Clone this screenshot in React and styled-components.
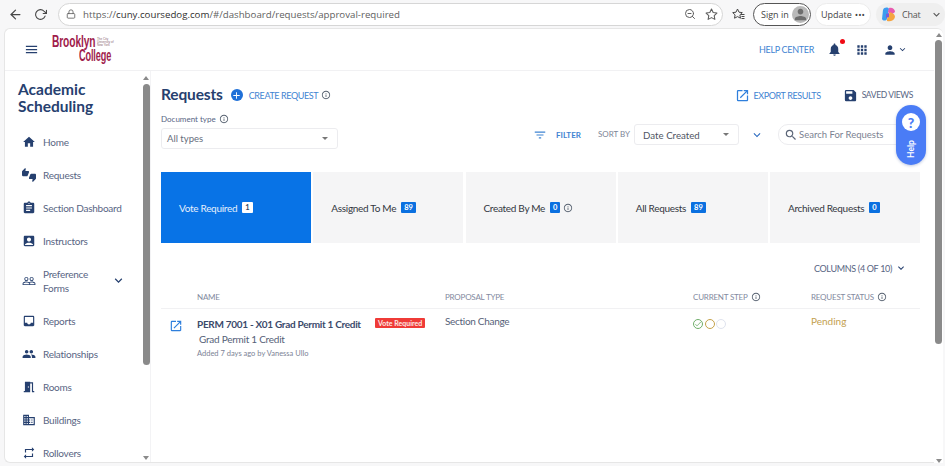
import styled, { createGlobalStyle } from "styled-components";
import {
  MdAccountBox,
  MdAdd,
  MdApps,
  MdAssignment,
  MdCheck,
  MdDomain,
  MdExpandMore,
  MdFilterList,
  MdHome,
  MdInbox,
  MdInfoOutline,
  MdMeetingRoom,
  MdMenu,
  MdNotifications,
  MdOpenInNew,
  MdPeople,
  MdPeopleOutline,
  MdPerson,
  MdRepeat,
  MdSave,
  MdSearch,
  MdThumbsUpDown,
} from "react-icons/md";
import { FiArrowLeft, FiLock, FiRotateCw, FiStar, FiZoomOut } from "react-icons/fi";

const navy = "#26406f";
const link = "#3f84d2";
const label = "#586583";

const GlobalStyle = createGlobalStyle`
  html, body {
    margin: 0;
    height: 466px;
    overflow: hidden;
    background: #f7f7f8;
    font-family: Lato, "Liberation Sans", sans-serif;
  }
  * { box-sizing: border-box; }
`;

const Window = styled.div`
  width: 945px;
  height: 466px;
  display: flex;
  flex-direction: column;
`;

const BrowserBar = styled.div`
  height: 28px;
  flex: none;
  display: flex;
  align-items: center;
  padding: 0 2px 0 8px;
  color: #444;
  font-family: "Open Sans", "Liberation Sans", sans-serif;
`;

const ChromeButton = styled.span`
  width: ${(p) => p.$w}px;
  flex: none;
  display: flex;
  justify-content: center;
  align-items: center;
  font-size: ${(p) => p.$size || 15}px;
  color: #484848;
`;

const UrlPill = styled.div`
  width: 665px;
  height: 23px;
  margin-left: 1px;
  flex: none;
  display: flex;
  align-items: center;
  gap: 7px;
  padding: 0 4px 0 7px;
  background: #fff;
  border: 1px solid #d6d6d6;
  border-radius: 12px;
  font-size: 9.7px;
  color: #5f5f5f;
  svg { flex: none; }
`;

const Url = styled.span`
  flex: 1;
  white-space: nowrap;
  b { font-weight: 400; color: #2f2f2f; }
`;

const UrlStar = styled(FiStar)`
  margin: 0 0 0 2px;
`;

const SignIn = styled.div`
  width: 58px;
  height: 23px;
  flex: none;
  display: flex;
  align-items: center;
  justify-content: space-between;
  padding: 0 1px 0 7px;
  border: 1px solid #555;
  border-radius: 12px;
  background: #fff;
  font-size: 9px;
`;

const Avatar = styled.span`
  width: 17px;
  height: 17px;
  border-radius: 50%;
  background: #b9b9b9;
  color: #6d6d6d;
  display: flex;
  align-items: center;
  justify-content: center;
  font-size: 17px;
`;

const UpdatePill = styled.div`
  width: 56px;
  height: 23px;
  margin-left: 4px;
  flex: none;
  display: flex;
  align-items: center;
  justify-content: center;
  gap: 3px;
  border: 1px solid #ececec;
  border-radius: 12px;
  background: #fff;
  font-size: 9px;
  white-space: nowrap;
`;

const ChatPill = styled.div`
  width: 69px;
  height: 23px;
  margin-left: 5px;
  flex: none;
  display: flex;
  align-items: center;
  gap: 5px;
  padding-left: 4px;
  border-radius: 12px;
  background: #efefef;
  font-size: 9px;
  letter-spacing: -0.2px;
  color: #555;
`;

const ChatChevron = styled(MdExpandMore)`
  margin-left: 4px;
  font-size: 13px;
`;

const PageRow = styled.div`
  flex: 1;
  min-height: 0;
  display: flex;
  padding: 0 2px 3px 4px;
`;

const Frame = styled.div`
  flex: 1;
  min-width: 0;
  display: flex;
  flex-direction: column;
  background: #fff;
  border: 1px solid #e6e6e6;
  border-right: 0;
  border-radius: 6px 0 0 6px;
  overflow: hidden;
  position: relative;
`;

const OuterScroll = styled.div`
  width: 9px;
  flex: none;
  background: #fff;
  border-top: 1px solid #e6e6e6;
  border-radius: 0 6px 0 0;
  display: flex;
  flex-direction: column;
  align-items: center;
`;

const Arrow = styled.span`
  width: 0;
  height: 0;
  flex: none;
  margin-top: ${(p) => p.$mt || 0}px;
  border-left: 3px solid transparent;
  border-right: 3px solid transparent;
  ${(p) => (p.$down ? "border-top" : "border-bottom")}: 4px solid #8a8a8a;
`;

const Thumb = styled.span`
  width: 7px;
  flex: none;
  height: ${(p) => p.$h}px;
  margin-top: ${(p) => p.$top}px;
  background: #8a8a8a;
  border-radius: 4px;
`;

const Spring = styled.span`
  flex: 1;
`;

const TopBar = styled.header`
  height: 42px;
  flex: none;
  display: flex;
  align-items: center;
  padding: 0 26px 0 19px;
  border-bottom: 1px solid #f1f1f3;
  color: ${navy};
`;

const Logo = styled.div`
  width: 62px;
  height: 28px;
  margin-left: 13px;
  margin-top: -2px;
  position: relative;
  color: #a01c4c;
  font-family: "Liberation Sans", sans-serif;
  font-weight: 700;
`;

const LogoWord = styled.span`
  position: absolute;
  left: ${(p) => p.$left}px;
  top: ${(p) => p.$top}px;
  font-size: 16px;
  line-height: 14px;
  transform: scaleX(${(p) => p.$scale});
  transform-origin: left top;
  white-space: nowrap;
  letter-spacing: -0.2px;
`;

const LogoSmall = styled.span`
  position: absolute;
  left: 45px;
  top: 3px;
  width: 17px;
  font-size: 3px;
  line-height: 3.4px;
  font-weight: 400;
  color: #8a6570;
`;

const HelpCenter = styled.a`
  margin-left: auto;
  color: ${link};
  font-size: 9px;
  letter-spacing: -0.3px;
`;

const Bell = styled.span`
  margin-left: 13px;
  position: relative;
  display: flex;
  font-size: 15px;
  &::after {
    content: "";
    position: absolute;
    top: -3px;
    right: -3px;
    width: 5px;
    height: 5px;
    border-radius: 50%;
    background: #f00a14;
  }
`;

const TopIcon = styled.span`
  margin-left: ${(p) => p.$ml}px;
  display: flex;
  font-size: ${(p) => p.$size}px;
`;

const Body = styled.div`
  flex: 1;
  min-height: 0;
  display: flex;
`;

const Sidebar = styled.aside`
  width: 146px;
  flex: none;
  display: flex;
  border-right: 1px solid #f3f3f5;
  overflow: hidden;
`;

const SideContent = styled.div`
  width: 137px;
  flex: none;
  padding: 10px 0 0 13px;
`;

const SideTitle = styled.h2`
  margin: 0 0 10px;
  font-size: 15.5px;
  line-height: 17px;
  font-weight: 700;
  color: ${navy};
`;

const NavList = styled.nav`
  display: flex;
  flex-direction: column;
`;

const NavItem = styled.div`
  min-height: ${(p) => (p.$tall ? 47 : 33)}px;
  display: flex;
  align-items: center;
  gap: 7px;
  padding-left: 4px;
  font-size: 10px;
  letter-spacing: -0.25px;
  line-height: 14px;
  color: ${label};
  svg { flex: none; color: ${navy}; font-size: 14px; }
`;

const NavText = styled.span`
  flex: 1;
`;

const NavChevron = styled.span`
  display: flex;
  margin-right: 16px;
  svg { font-size: 15px; }
`;

const SideScroll = styled.div`
  width: 8px;
  flex: none;
  display: flex;
  flex-direction: column;
  align-items: center;
  padding: 5px 0 2px;
`;

const Main = styled.main`
  flex: 1;
  min-width: 0;
  padding: 12px 0 0 10px;
  position: relative;
`;

const TitleRow = styled.div`
  display: flex;
  align-items: center;
  height: 24px;
  padding-right: 21px;
`;

const Title = styled.h1`
  margin: -2px 0 0;
  font-size: 15.5px;
  letter-spacing: -0.15px;
  font-weight: 700;
  color: ${navy};
`;

const PlusCircle = styled.span`
  width: 12px;
  height: 12px;
  margin-left: 8px;
  border-radius: 50%;
  background: #1f70d8;
  color: #fff;
  display: flex;
  align-items: center;
  justify-content: center;
  font-size: 11px;
`;

const LinkText = styled.span`
  color: ${(p) => p.$color || link};
  font-size: ${(p) => p.$size || 9}px;
  letter-spacing: ${(p) => p.$ls ?? -0.4}px;
  font-weight: ${(p) => p.$weight || 400};
  margin-left: ${(p) => p.$ml || 0}px;
  white-space: nowrap;
`;

const Info = styled(MdInfoOutline)`
  flex: none;
  font-size: ${(p) => p.$size || 10}px;
  color: #55606f;
  margin-left: ${(p) => p.$ml || 3}px;
`;

const TitleAction = styled.div`
  margin-left: ${(p) => p.$ml || "auto"};
  display: flex;
  align-items: center;
  gap: 4px;
  svg { font-size: 15px; color: ${(p) => p.$icon}; }
`;

const Controls = styled.div`
  margin-top: 3px;
  display: flex;
  align-items: flex-end;
  height: 39px;
`;

const RightControls = styled.div`
  display: flex;
  align-items: center;
  margin-bottom: 4px;
`;

const FieldLabel = styled.div`
  display: flex;
  align-items: center;
  font-size: 8px;
  color: ${label};
  margin-bottom: 4px;
`;

const Select = styled.div`
  width: ${(p) => p.$w}px;
  height: 21px;
  display: flex;
  align-items: center;
  justify-content: space-between;
  padding: 0 9px 0 ${(p) => p.$pl}px;
  background: #fff;
  border: 1px solid #ececef;
  border-radius: 3px;
  font-size: ${(p) => p.$fs}px;
  color: ${(p) => p.$color};
  white-space: nowrap;
`;

const Caret = styled.span`
  width: 0;
  height: 0;
  border-left: 3px solid transparent;
  border-right: 3px solid transparent;
  border-top: 3px solid #777;
`;

const FilterLink = styled.div`
  margin-left: 195px;
  width: 65px;
  height: 21px;
  display: flex;
  align-items: center;
  color: ${link};
  svg { font-size: 14px; }
`;

const SortBy = styled.span`
  font-size: 8px;
  color: #7c8496;
  margin-right: 4px;
  white-space: nowrap;
  line-height: 21px;
`;

const SortToggle = styled.span`
  width: 36px;
  height: 21px;
  margin-right: 3px;
  display: flex;
  align-items: center;
  justify-content: center;
  color: #2d6cc0;
  font-size: 14px;
`;

const SearchBox = styled.div`
  width: 140px;
  height: 21px;
  display: flex;
  align-items: center;
  gap: 1px;
  padding-left: 5px;
  border: 1px solid #ececef;
  border-radius: 10px;
  font-size: 9.5px;
  color: #7b8291;
  white-space: nowrap;
  svg { font-size: 14px; color: #5c6678; }
`;

const Tabs = styled.div`
  margin-top: 23px;
  width: 759px;
  display: grid;
  grid-template-columns: repeat(5, 150px);
  gap: 2.25px;
`;

const Tab = styled.div`
  height: 71px;
  display: flex;
  align-items: center;
  padding-left: 18px;
  font-size: 10px;
  letter-spacing: -0.3px;
  background: ${(p) => (p.$active ? "#0873e6" : "#f5f5f6")};
  color: ${(p) => (p.$active ? "#e4effc" : "#33373f")};
  white-space: nowrap;
`;

const Count = styled.span`
  height: 11px;
  min-width: 10px;
  margin-left: 5px;
  padding: 0 3px;
  border-radius: 1px;
  display: flex;
  align-items: center;
  justify-content: center;
  font-size: 7.5px;
  letter-spacing: 0;
  font-weight: 700;
  background: ${(p) => (p.$active ? "#fff" : "#0b70e0")};
  color: ${(p) => (p.$active ? "#33475f" : "#fff")};
`;

const ColumnsRow = styled.div`
  width: 746px;
  height: 14px;
  margin-top: 18px;
  display: flex;
  justify-content: flex-end;
  align-items: center;
  gap: 3px;
  font-size: 9px;
  letter-spacing: -0.33px;
  color: ${label};
  svg { font-size: 12px; color: ${navy}; }
`;

const tableCols = "36px 248px 248px 118px 1fr";

const TableHead = styled.div`
  width: 759px;
  height: 20px;
  margin-top: 14px;
  display: grid;
  grid-template-columns: ${tableCols};
  align-items: center;
  border-bottom: 1px solid #f1f1f3;
  padding-bottom: 4px;
  font-size: 8px;
  letter-spacing: -0.2px;
  color: #838aa0;
`;

const HeadCell = styled.span`
  display: flex;
  align-items: center;
  white-space: nowrap;
`;

const TableRow = styled.div`
  width: 759px;
  display: grid;
  grid-template-columns: ${tableCols};
  padding-top: 8px;
`;

const OpenIcon = styled.span`
  display: flex;
  padding: 2px 0 0 8px;
  color: #2f7fdc;
  font-size: 14px;
`;

const NameCell = styled.div`
  position: relative;
`;

const RowTitle = styled.div`
  font-size: 10px;
  letter-spacing: -0.3px;
  line-height: 14px;
  font-weight: 700;
  color: #3b4a6b;
  white-space: nowrap;
`;

const RowSub = styled.div`
  margin: 1px 0 0 2px;
  font-size: 10px;
  letter-spacing: -0.25px;
  line-height: 14px;
  color: #565f78;
`;

const RowMeta = styled.div`
  margin-top: 2px;
  font-size: 7.5px;
  line-height: 11px;
  color: #7c8396;
`;

const VoteBadge = styled.span`
  position: absolute;
  left: 178px;
  top: 1px;
  height: 10px;
  padding: 0 3px;
  display: flex;
  align-items: center;
  background: #ef3b37;
  border-radius: 1px;
  color: #fde9e6;
  font-size: 7px;
  font-weight: 700;
  white-space: nowrap;
`;

const CellText = styled.div`
  margin-top: -3px;
  font-size: 10px;
  letter-spacing: ${(p) => p.$ls}px;
  line-height: 14px;
  color: ${(p) => p.$color};
`;

const Steps = styled.div`
  display: flex;
  gap: 1.5px;
  padding-top: 2px;
`;

const Step = styled.span`
  width: 10px;
  height: 10px;
  border-radius: 50%;
  border: 1.3px solid ${(p) => p.$color};
  color: ${(p) => p.$color};
  display: flex;
  align-items: center;
  justify-content: center;
  font-size: 8px;
`;

const HelpWidget = styled.div`
  position: absolute;
  left: 745px;
  top: 34px;
  width: 30px;
  height: 60px;
  border-radius: 15px;
  background: #4a7cf6;
  display: flex;
  flex-direction: column;
  align-items: center;
  padding-top: 8px;
  color: #fff;
  box-shadow: 0 1px 3px rgba(40, 70, 150, 0.3);
`;

const HelpDot = styled.span`
  width: 18px;
  height: 18px;
  border-radius: 50%;
  background: #fff;
  color: #4a7cf6;
  font-size: 14px;
  font-weight: 900;
  display: flex;
  align-items: center;
  justify-content: center;
`;

const HelpText = styled.span`
  margin-top: 13px;
  font-size: 8.5px;
  font-weight: 700;
  transform: rotate(-90deg);
`;

const navItems = [
  { text: "Home", icon: MdHome },
  { text: "Requests", icon: MdThumbsUpDown },
  { text: "Section Dashboard", icon: MdAssignment },
  { text: "Instructors", icon: MdAccountBox },
  { text: "Preference Forms", icon: MdPeopleOutline, tall: true },
  { text: "Reports", icon: MdInbox },
  { text: "Relationships", icon: MdPeople },
  { text: "Rooms", icon: MdMeetingRoom },
  { text: "Buildings", icon: MdDomain },
  { text: "Rollovers", icon: MdRepeat },
];

const tabs = [
  { text: "Vote Required", count: "1", active: true },
  { text: "Assigned To Me", count: "89" },
  { text: "Created By Me", count: "0", info: true },
  { text: "All Requests", count: "89" },
  { text: "Archived Requests", count: "0" },
];

const CopilotLogo = () => (
  <svg width="17" height="17" viewBox="0 0 17 17">
    <path d="M3 4 C4 1 8 1 9 3 L7 13 C6 15 3 15 2 13 Z" fill="#3c9cf0" />
    <path d="M9 2 C12 1 15 3 15 6 L11 9 L8 6 Z" fill="#e85bb0" />
    <path d="M7 13 L10 6 C12 7 15 8 15 11 C14 15 10 16 7 15 Z" fill="#f5a540" />
    <path d="M6 8 L9 7 L9 11 L6 12 Z" fill="#7a5bd8" />
  </svg>
);

const FavoritesIcon = () => (
  <svg width="13" height="13" viewBox="0 0 13 13" fill="none" stroke="currentColor" strokeWidth="1">
    <path d="M5.5 1 L7 4.2 L10.3 4.6 L7.9 6.9 L8.5 10.2 L5.5 8.6 L2.5 10.2 L3.1 6.9 L0.7 4.6 L4 4.2 Z" />
    <path d="M9 6.5 H12.5 M9.5 8.5 H12.5 M9.5 10.5 H12.5" />
  </svg>
);

export default function App() {
  return (
    <Window>
      <GlobalStyle />
      <BrowserBar>
        <ChromeButton $w={15}><FiArrowLeft /></ChromeButton>
        <ChromeButton $w={34} $size={13}><FiRotateCw /></ChromeButton>
        <UrlPill>
          <FiLock size={10} />
          <Url>https://<b>cuny.coursedog.com</b>/#/dashboard/requests/approval-required</Url>
          <FiZoomOut size={12} />
          <UrlStar size={13} />
        </UrlPill>
        <ChromeButton $w={30}><FavoritesIcon /></ChromeButton>
        <SignIn>
          Sign in
          <Avatar><MdPerson /></Avatar>
        </SignIn>
        <UpdatePill>Update <span>•••</span></UpdatePill>
        <ChatPill>
          <CopilotLogo />
          Chat
          <ChatChevron />
        </ChatPill>
      </BrowserBar>
      <PageRow>
        <Frame>
          <TopBar>
            <MdMenu size={15} />
            <Logo>
              <LogoWord $left={0} $top={0} $scale={0.64}>Brooklyn</LogoWord>
              <LogoWord $left={27} $top={14} $scale={0.57}>College</LogoWord>
              <LogoSmall>The City University of New York</LogoSmall>
            </Logo>
            <HelpCenter>HELP CENTER</HelpCenter>
            <Bell><MdNotifications /></Bell>
            <TopIcon $ml={13} $size={14}><MdApps /></TopIcon>
            <TopIcon $ml={14} $size={14}><MdPerson /></TopIcon>
            <TopIcon $ml={0} $size={11}><MdExpandMore /></TopIcon>
          </TopBar>
          <Body>
            <Sidebar>
              <SideContent>
                <SideTitle>Academic<br />Scheduling</SideTitle>
                <NavList>
                  {navItems.map((item) => (
                    <NavItem key={item.text} $tall={item.tall}>
                      <item.icon />
                      <NavText>
                        {item.tall ? <>Preference<br />Forms</> : item.text}
                      </NavText>
                      {item.tall && <NavChevron><MdExpandMore /></NavChevron>}
                    </NavItem>
                  ))}
                </NavList>
              </SideContent>
              <SideScroll>
                <Arrow />
                <Thumb $h={281} $top={4} />
                <Spring />
                <Arrow $down />
              </SideScroll>
            </Sidebar>
            <Main>
              <TitleRow>
                <Title>Requests</Title>
                <PlusCircle><MdAdd /></PlusCircle>
                <LinkText $ml={6}>CREATE REQUEST</LinkText>
                <Info />
                <TitleAction $icon="#2f7fdc">
                  <MdOpenInNew />
                  <LinkText>EXPORT RESULTS</LinkText>
                </TitleAction>
                <TitleAction $ml="22px" $icon={navy}>
                  <MdSave />
                  <LinkText $color={label} $size={8.5} $ls={-0.35}>SAVED VIEWS</LinkText>
                </TitleAction>
              </TitleRow>
              <Controls>
                <div>
                  <FieldLabel>Document type<Info /></FieldLabel>
                  <Select $w={177} $pl={5} $fs={9.5} $color="#666d7c">All types<Caret /></Select>
                </div>
                <RightControls>
                  <FilterLink>
                    <MdFilterList />
                    <LinkText $ml={9} $size={8} $ls={0} $weight={700}>FILTER</LinkText>
                  </FilterLink>
                  <SortBy>SORT BY</SortBy>
                  <Select $w={105} $pl={8} $fs={9.7} $color="#4f5564">Date Created<Caret /></Select>
                  <SortToggle><MdExpandMore /></SortToggle>
                  <SearchBox><MdSearch />Search For Requests</SearchBox>
                </RightControls>
              </Controls>
              <Tabs>
                {tabs.map((tab) => (
                  <Tab key={tab.text} $active={tab.active}>
                    {tab.text}
                    <Count $active={tab.active}>{tab.count}</Count>
                    {tab.info && <Info />}
                  </Tab>
                ))}
              </Tabs>
              <ColumnsRow>COLUMNS (4 OF 10) <MdExpandMore /></ColumnsRow>
              <TableHead>
                <span />
                <HeadCell>NAME</HeadCell>
                <HeadCell>PROPOSAL TYPE</HeadCell>
                <HeadCell>CURRENT STEP<Info /></HeadCell>
                <HeadCell>REQUEST STATUS<Info /></HeadCell>
              </TableHead>
              <TableRow>
                <OpenIcon><MdOpenInNew /></OpenIcon>
                <NameCell>
                  <RowTitle>PERM 7001 - X01 Grad Permit 1 Credit</RowTitle>
                  <VoteBadge>Vote Required</VoteBadge>
                  <RowSub>Grad Permit 1 Credit</RowSub>
                  <RowMeta>Added 7 days ago by Vanessa Ullo</RowMeta>
                </NameCell>
                <CellText $color="#565f78" $ls={-0.3}>Section Change</CellText>
                <Steps>
                  <Step $color="#6fae6a"><MdCheck /></Step>
                  <Step $color="#c5a24a" />
                  <Step $color="#dfe3ee" />
                </Steps>
                <CellText $color="#c4a14f" $ls={0}>Pending</CellText>
              </TableRow>
              <HelpWidget>
                <HelpDot>?</HelpDot>
                <HelpText>Help</HelpText>
              </HelpWidget>
            </Main>
          </Body>
        </Frame>
        <OuterScroll>
          <Arrow $mt={4} />
          <Thumb $h={304} $top={3} />
          <Spring />
          <Arrow $down />
        </OuterScroll>
      </PageRow>
    </Window>
  );
}
